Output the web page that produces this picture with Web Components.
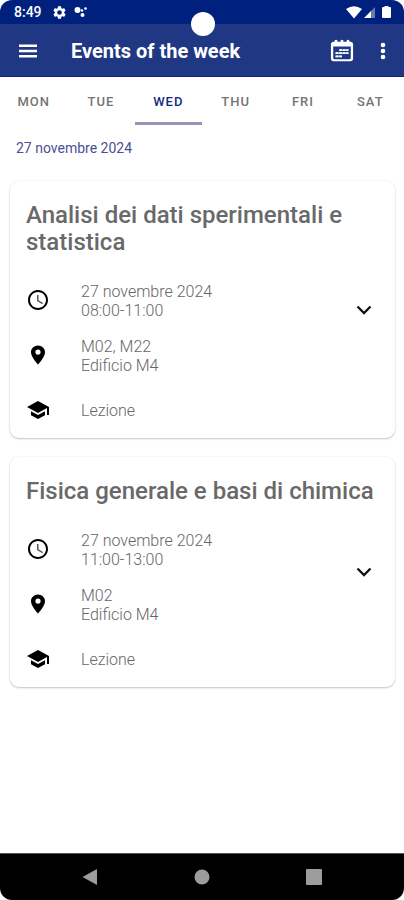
<!DOCTYPE html>
<html lang="it">
<head>
<meta charset="utf-8">
<meta name="viewport" content="width=device-width, initial-scale=1">
<title>Events of the week</title>
<style>
  html, body { margin: 0; height: 100%; background: #fff; }
  body { font-family: Roboto, "Liberation Sans", sans-serif; color: #757575; }
</style>
</head>
<body>
<phone-screen>
  <status-bar slot="top" time="8:49"></status-bar>
  <app-bar slot="top">Events of the week</app-bar>
  <day-tabs slot="top" days="MON,TUE,WED,THU,FRI,SAT" selected="WED"></day-tabs>
  <day-label>27 novembre 2024</day-label>
  <event-card>
    <span slot="title">Analisi dei dati sperimentali e statistica</span>
    <event-row icon="clock">27 novembre 2024<br>08:00-11:00</event-row>
    <event-row icon="pin">M02, M22<br>Edificio M4</event-row>
    <event-row icon="school">Lezione</event-row>
  </event-card>
  <event-card>
    <span slot="title">Fisica generale e basi di chimica</span>
    <event-row icon="clock">27 novembre 2024<br>11:00-13:00</event-row>
    <event-row icon="pin">M02<br>Edificio M4</event-row>
    <event-row icon="school">Lezione</event-row>
  </event-card>
  <nav-bar slot="bottom"></nav-bar>
</phone-screen>

<script>
const define = (name, render) => customElements.define(name, class extends HTMLElement {
  constructor() {
    super();
    this.attachShadow({ mode: 'open' });
  }
  connectedCallback() {
    this.shadowRoot.innerHTML = render(this);
  }
});

const ICONS = {
  clock: '<path d="M11.99 2C6.47 2 2 6.48 2 12s4.47 10 9.99 10C17.52 22 22 17.52 22 12S17.52 2 11.99 2zM12 20c-4.42 0-8-3.58-8-8s3.58-8 8-8 8 3.58 8 8-3.58 8-8 8z"/><path fill="#555" d="M12.5 7H11v6l5.25 3.15.75-1.23-4.5-2.67z"/>',
  pin: '<path d="M12 2.500C8.130 2.500 5 5.500 5 9.200c0 5 7 12.300 7 12.300s7-7.300 7-12.300c0-3.700-3.130-6.700-7-6.700zm0 9.200a2.600 2.600 0 1 1 0-5.200 2.600 2.600 0 0 1 0 5.200z"/>',
  school: '<path d="M5 13.180v4L12 21l7-3.820v-4L12 17l-7-3.820zM12 3L1 9l11 6 9-4.910V17h2V9L12 3z"/>'
};

define('phone-screen', () => `
  <style>
    :host { display: flex; flex-direction: column; min-height: 100vh; }
    main { flex: 1; display: flex; flex-direction: column; gap: 19px; padding: 13px 9px 20px 10px; }
  </style>
  <header><slot name="top"></slot></header>
  <main><slot></slot></main>
  <slot name="bottom"></slot>`);

define('status-bar', el => `
  <style>
    :host { display: flex; align-items: center; position: relative; height: 24px; padding: 0 11px 0 14px;
      background: #00207d; color: #fff; border-radius: 12px 12px 0 0; font-size: 14px; font-weight: 500; }
    svg { display: block; fill: #fff; }
    .gear { margin-left: 11px; }
    .dots { margin-left: 8px; }
    .system { display: flex; align-items: center; gap: 1px; margin-left: auto; }
    .battery { margin-left: 3px; }
    .camera { position: absolute; left: 50%; top: 12px; width: 24px; height: 24px; margin-left: -11px;
      border-radius: 50%; background: #fff; }
  </style>
  <span>${el.getAttribute('time')}</span>
  <svg class="gear" width="13" height="13" viewBox="2 2 20 20"><path d="M19.140 12.940c.04-.3.060-.61.060-.94 0-.32-.02-.64-.07-.94l2.030-1.580a.49.49 0 0 0 .12-.61l-1.920-3.320a.49.49 0 0 0-.59-.22l-2.390.96a7 7 0 0 0-1.620-.94l-.36-2.540A.48.48 0 0 0 13.920 2.400h-3.840a.48.48 0 0 0-.47.41l-.36 2.540c-.59.24-1.130.57-1.620.94l-2.390-.96a.48.48 0 0 0-.59.22L2.740 8.870a.48.48 0 0 0 .12.61l2.030 1.580a6 6 0 0 0 0 1.880l-2.030 1.580a.49.49 0 0 0-.12.61l1.920 3.320c.12.22.37.29.59.22l2.390-.96c.5.38 1.030.7 1.620.94l.36 2.540c.05.24.24.41.48.41h3.840c.24 0 .44-.17.47-.41l.36-2.540a7 7 0 0 0 1.620-.94l2.390.96c.22.08.47 0 .59-.22l1.920-3.320a.48.48 0 0 0-.12-.61zM12 15.600a3.600 3.600 0 1 1 0-7.200 3.600 3.600 0 0 1 0 7.200z"/></svg>
  <svg class="dots" width="14" height="12" viewBox="0 0 14 12"><circle cx="3.500" cy="4" r="3"/><circle cx="8" cy="4.500" r="1.300"/><circle cx="11.500" cy="2.500" r="1.300"/><circle cx="8.500" cy="9" r="2"/></svg>
  <span class="system">
    <svg width="16" height="13" viewBox="0 0 16 13"><path d="M0 3Q8-2.500 16 3L8 12.500z"/></svg>
    <svg width="13" height="13" viewBox="0 0 13 13"><path opacity=".4" d="M12 1v11H7V6z"/><path d="M8 5v7H1z"/></svg>
    <svg class="battery" width="13" height="14" viewBox="0 0 13 14"><path d="M4.500 1h4v1H10q1 0 1 1v9q0 1-1 1H3q-1 0-1-1V3q0-1 1-1h1.500z"/></svg>
  </span>
  <span class="camera"></span>`);

define('app-bar', () => `
  <style>
    :host { display: flex; align-items: center; height: 53px; padding: 2px 9px 0 16px;
      background: #203784; color: #fff; border-bottom: 1px solid #0b2479; box-sizing: border-box; }
    h1 { flex: 1; margin: 0 0 0 31px; font-size: 20px; line-height: 24px; font-weight: 700; }
    button { display: grid; place-items: center; padding: 0; border: 0; background: none; color: inherit; }
    svg { display: block; fill: currentColor; }
    .more { width: 24px; height: 32px; margin-left: 17px; }
  </style>
  <button aria-label="Menu"><svg width="24" height="24" viewBox="0 0 24 24"><path d="M3 5.500h18v2.500H3zM3 10.800h18v2.500H3zM3 16h18v2.500H3z"/></svg></button>
  <h1><slot></slot></h1>
  <button aria-label="Calendar"><svg width="24" height="24" viewBox="0 0 24 26"><path fill-rule="evenodd" d="M3 3h1V1.500Q5.500 0 7 1.500V3h3.500V1.500q1.500-1.500 3 0V3H17V1.500q1.500-1.500 3 0V3h1q3 0 3 3v15q0 3-3 3H3q-3 0-3-3V6q0-3 3-3zM2.500 8v12.500q0 1.500 1.500 1.500h16q1.500 0 1.500-1.500V8z"/><path d="M9 11h10v2H9zM5 14.300h14v2H5zM5 17.800h7v2H5z" opacity=".55"/><path d="M9 11h3v2H9zM12.800 11h3v2h-3zM16.500 11H19v2h-2.500zM5 14.300h3.200v2H5zM9 14.300h3v2H9zM12.800 14.300h3v2h-3zM16.500 14.300H19v2h-2.500zM5 17.800h3.200v2H5zM9 17.800h3v2H9z"/></svg></button>
  <button class="more" aria-label="More options"><svg width="6" height="18" viewBox="0 0 6 18"><circle cx="3" cy="3" r="2.300"/><circle cx="3" cy="9" r="2.300"/><circle cx="3" cy="15" r="2.300"/></svg></button>`);

define('day-tabs', el => `
  <style>
    :host { display: flex; height: 48px; }
    button { flex: 1 1 0; padding: 2px 0 0; border: 0; border-top: 3px solid transparent; border-bottom: 3px solid transparent;
      background: none; font: 500 13px/18px Roboto, "Liberation Sans", sans-serif; letter-spacing: 1px; color: #757575; }
    button[aria-selected="true"] { color: #142a80; border-bottom-color: #9696bb; }
  </style>
  ${el.getAttribute('days').split(',').map(d =>
    `<button role="tab" aria-selected="${d === el.getAttribute('selected')}">${d}</button>`).join('')}`);

define('day-label', () => `
  <style>
    :host { display: block; padding: 0 6px; margin-bottom: 4px; font-size: 14px; line-height: 20px; color: #4b4f96; }
  </style>
  <slot></slot>`);

define('event-card', () => `
  <style>
    :host { display: grid; grid-template-rows: auto auto; row-gap: 16px; padding: 21px 16px 1px; border-radius: 9px;
      background: #fff; box-shadow: 0 1px 2px rgba(0,0,0,.22), 0 0 2px rgba(0,0,0,.08); }
    h2 { grid-area: 1 / 1; margin: 0; font-size: 24px; line-height: 27px; font-weight: 500; color: #696969; }
    .rows { grid-area: 2 / 1; }
    button { grid-area: 1 / 1 / 3 / 2; place-self: center end; padding: 0; border: 0; background: none;
      margin: 0 3px 20px 0; }
    svg { display: block; }
  </style>
  <h2><slot name="title"></slot></h2>
  <div class="rows"><slot></slot></div>
  <button aria-label="Expand"><svg width="24" height="24" viewBox="0 0 24 24"><path d="M5.500 8.500l6.500 6.500 6.500-6.500" fill="none" stroke="#111" stroke-width="2.300"/></svg></button>`);

define('event-row', el => `
  <style>
    :host { display: flex; align-items: center; gap: 31px; height: 55px; font-size: 16px; line-height: 19px; font-weight: 300; color: #666; }
    svg { display: block; flex: none; fill: #000; }
    div { padding-top: 2px; }
  </style>
  <svg width="24" height="24" viewBox="0 0 24 24" aria-hidden="true">${ICONS[el.getAttribute('icon')]}</svg>
  <div><slot></slot></div>`);

define('nav-bar', () => `
  <style>
    :host { display: flex; justify-content: center; gap: 88px; align-items: center; height: 47px; background: #000;
      border-top: 1px solid #555; box-sizing: border-box; border-radius: 0 0 12px 12px; }
    button { padding: 0; border: 0; background: none; }
    svg { display: block; fill: #9c9c9c; }
  </style>
  <button aria-label="Back"><svg width="24" height="24" viewBox="0 0 24 24"><path d="M19 4v16L4.500 12z"/></svg></button>
  <button aria-label="Home"><svg width="24" height="24" viewBox="0 0 24 24"><circle cx="12" cy="12" r="7.500"/></svg></button>
  <button aria-label="Recent apps"><svg width="24" height="24" viewBox="0 0 24 24"><rect x="4" y="4" width="16" height="16" rx="1"/></svg></button>`);
</script>
</body>
</html>
